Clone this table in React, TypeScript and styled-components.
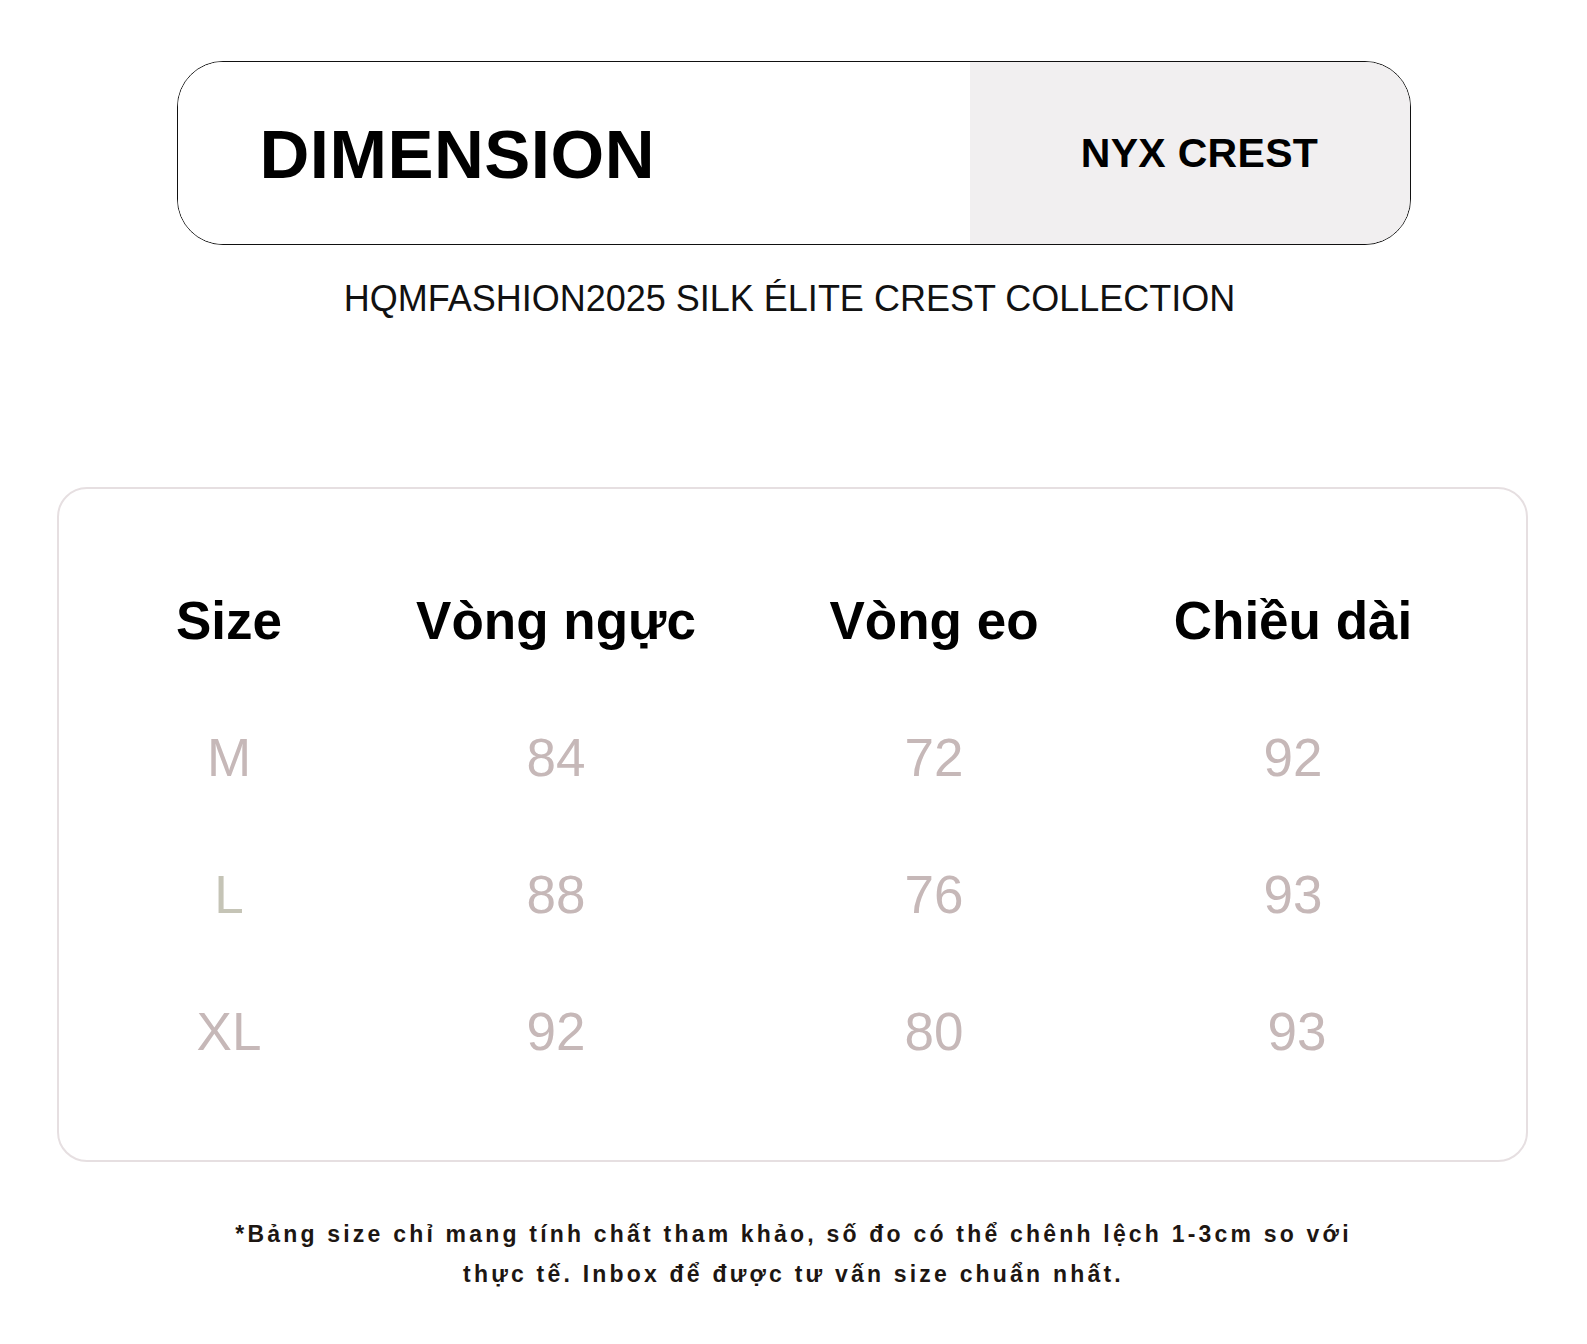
import styled, { createGlobalStyle } from 'styled-components';

const GlobalStyle = createGlobalStyle`
	html, body {
		margin: 0;
		padding: 0;
		background: #ffffff;
	}

	body {
		font-family: 'Liberation Sans', Arial, sans-serif;
		color: #000000;
	}
`;

interface SizeRow {
	size: string;
	chest: string;
	waist: string;
	length: string;
	sizeTone?: 'rose' | 'sage';
	lengthShift?: number;
}

const headers = ['Size', 'Vòng ngực', 'Vòng eo', 'Chiều dài'];

const rows: SizeRow[] = [
	{ size: 'M', chest: '84', waist: '72', length: '92' },
	{ size: 'L', chest: '88', waist: '76', length: '93', sizeTone: 'sage' },
	{ size: 'XL', chest: '92', waist: '80', length: '93', lengthShift: 8 },
];

export default function App() {
	return (
		<>
			<GlobalStyle />
			<Page>
				<TitleBar>
					<TitleMain>
						<TitleText>DIMENSION</TitleText>
					</TitleMain>
					<TitleSide>
						<SideText>NYX CREST</SideText>
					</TitleSide>
				</TitleBar>

				<Subtitle>HQMFASHION2025 SILK ÉLITE CREST COLLECTION</Subtitle>

				<TableCard>
					<Grid>
						{headers.map((h) => (
							<HeadCell key={h}>{h}</HeadCell>
						))}
						{rows.map((r) => (
							<Row key={r.size}>
								<ValueCell $tone={r.sizeTone ?? 'rose'}>{r.size}</ValueCell>
								<ValueCell $tone='rose'>{r.chest}</ValueCell>
								<ValueCell $tone='rose'>{r.waist}</ValueCell>
								<ValueCell $tone='rose' $shift={r.lengthShift ?? 0}>
									{r.length}
								</ValueCell>
							</Row>
						))}
					</Grid>
				</TableCard>

				<Note>
					*Bảng size chỉ mang tính chất tham khảo, số đo có thể chênh lệch 1-3cm so với
					<br />
					thực tế. Inbox để được tư vấn size chuẩn nhất.
				</Note>
			</Page>
		</>
	);
}

const Page = styled.div`
	width: 1587px;
	height: 1344px;
	display: flex;
	flex-direction: column;
	align-items: center;
	padding-top: 61px;
	box-sizing: border-box;
	background: #ffffff;
	overflow: hidden;
`;

const TitleBar = styled.div`
	display: flex;
	width: 1234px;
	height: 184px;
	box-sizing: border-box;
	border: 1.6px solid #111111;
	border-radius: 46px;
	overflow: hidden;
`;

const TitleMain = styled.div`
	flex: 0 0 792px;
	display: flex;
	align-items: center;
	padding-left: 82px;
	padding-top: 2px;
	box-sizing: border-box;
	background: #ffffff;
`;

const TitleText = styled.div`
	font-family: 'Liberation Sans', Arial, sans-serif;
	font-weight: 700;
	font-size: 69px;
	letter-spacing: 0.5px;
	line-height: 1;
`;

const TitleSide = styled.div`
	flex: 1;
	display: flex;
	align-items: center;
	justify-content: center;
	background: #f1eff0;
	padding-left: 20px;
`;

const SideText = styled.div`
	font-family: 'Liberation Sans', Arial, sans-serif;
	font-weight: 700;
	font-size: 41px;
	line-height: 1;
	letter-spacing: 0.3px;
`;

const Subtitle = styled.div`
	margin-top: 32px;
	font-family: 'Liberation Sans', Arial, sans-serif;
	font-size: 36px;
	line-height: 1.2;
	color: #111111;
	transform: translateX(-4px);
`;

const TableCard = styled.div`
	margin-top: 167px;
	width: 1471px;
	height: 675px;
	box-sizing: border-box;
	border: 2px solid #e6dfe1;
	border-radius: 30px;
	padding: 97px 56px 0 42px;
	transform: translateX(-1px);
`;

const Grid = styled.div`
	display: grid;
	grid-template-columns: 256px 398px 358px 360px;
	grid-auto-rows: auto;
`;

const HeadCell = styled.div`
	text-align: center;
	font-family: 'Liberation Sans', Arial, sans-serif;
	font-weight: 700;
	font-size: 53px;
	line-height: 70px;
	color: #000000;
	margin-bottom: 67px;
`;

const Row = styled.div`
	display: contents;
`;

const ValueCell = styled.div<{ $tone: 'rose' | 'sage'; $shift?: number }>`
	text-align: center;
	font-family: 'Liberation Sans', Arial, sans-serif;
	font-size: 53px;
	line-height: 70px;
	height: 137px;
	color: ${({ $tone }) => ($tone === 'sage' ? '#c5c4b6' : '#c6b8b8')};
	padding-left: ${({ $shift }) => $shift ?? 0}px;
`;

const Note = styled.div`
	margin-top: 52px;
	text-align: center;
	font-family: 'Liberation Sans', Arial, sans-serif;
	font-size: 23px;
	font-weight: 700;
	letter-spacing: 3.2px;
	line-height: 40px;
	color: #1d1612;
`;
